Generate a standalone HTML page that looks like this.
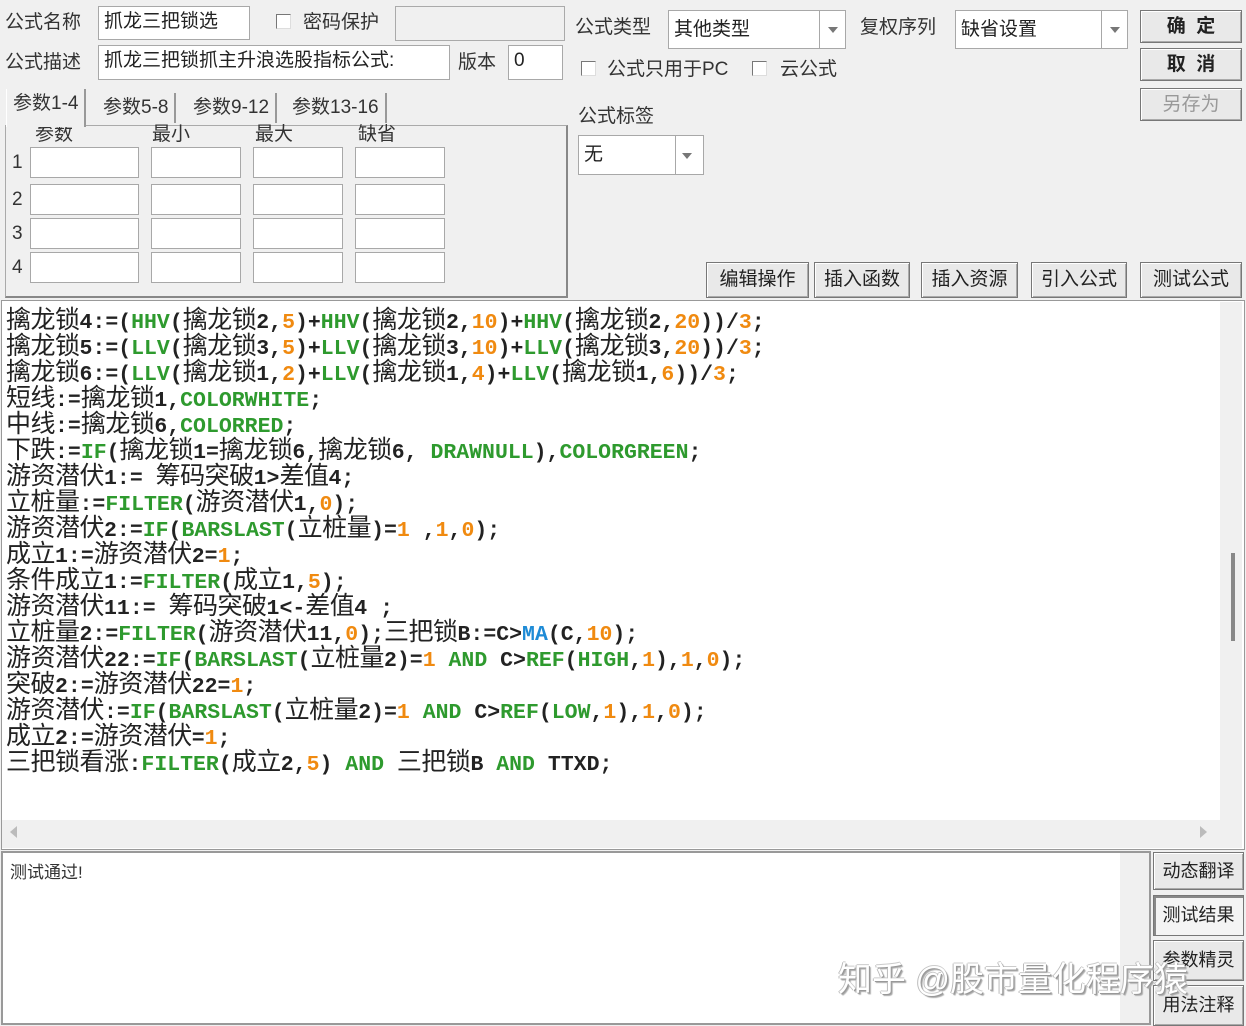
<!DOCTYPE html>
<html><head><meta charset="utf-8"><style>
*{box-sizing:border-box;margin:0;padding:0}
body{width:1246px;height:1026px;background:#f0f0f0;position:relative;overflow:hidden;font-family:"Liberation Sans","Noto Sans CJK SC",sans-serif;color:#222}
.a{position:absolute}
.lbl{position:absolute;font-size:19px;line-height:24px;color:#333;white-space:nowrap}
.inp{position:absolute;background:#fff;border:1px solid #a8a8a8;font-size:19px;line-height:30px;padding-left:5px;color:#222;white-space:nowrap}
.cb{position:absolute;width:15px;height:15px;background:#fff;border:1px solid #777;border-right-color:#ddd;border-bottom-color:#ddd}
.btn{position:absolute;background:#e9e9e9;border:1px solid #777;box-shadow:inset 1px 1px 0 #fff,inset -1px -1px 0 #aaa;font-size:19px;text-align:center;color:#222;white-space:nowrap}
.combo{position:absolute;background:#fff;border:1px solid #a8a8a8;font-size:19px;padding-left:5px;color:#222}
.combo .sep{position:absolute;top:0;bottom:0;border-left:1px solid #a8a8a8}
.combo .arr{position:absolute;width:0;height:0;border-left:5px solid transparent;border-right:5px solid transparent;border-top:6px solid #777}
.tab{position:absolute;font-size:19px;line-height:30px;color:#333;border-right:2px solid #999;padding:0 6px}
#code{position:absolute;left:6px;top:305px;width:1210px;font-family:"Noto Sans CJK SC",sans-serif;font-size:25px;color:#222;letter-spacing:-0.5px}
#code div{height:26px;line-height:26px;white-space:pre}
#code b{font-family:"Liberation Mono",monospace;font-weight:bold;font-size:21.5px;letter-spacing:0;line-height:0}
.g{color:#2e9a2e}.o{color:#f08a10}.bl{color:#1e8bd6}
</style></head><body>
<div class="lbl" style="left:5px;top:11px">公式名称</div>
<div class="inp" style="left:98px;top:6px;width:152px;height:34px">抓龙三把锁选</div>
<div class="cb" style="left:276px;top:14px"></div>
<div class="lbl" style="left:303px;top:11px">密码保护</div>
<div class="a" style="left:395px;top:6px;width:170px;height:35px;background:#f0f0f0;border:1px solid #aaa"></div>
<div class="lbl" style="left:5px;top:51px">公式描述</div>
<div class="inp" style="left:98px;top:45px;width:352px;height:35px">抓龙三把锁抓主升浪选股指标公式:</div>
<div class="lbl" style="left:458px;top:51px">版本</div>
<div class="inp" style="left:508px;top:45px;width:55px;height:35px">0</div>

<div class="a" style="left:5px;top:125px;width:563px;height:173px;border:1px solid #aaa;border-right:2px solid #888;border-bottom:2px solid #888"></div>
<div class="tab" style="left:6px;top:89px;height:38px;background:#f0f0f0;border-left:1px solid #fff;z-index:2">参数1-4</div>
<div class="tab" style="left:97px;top:93px">参数5-8</div>
<div class="tab" style="left:187px;top:93px">参数9-12</div>
<div class="tab" style="left:286px;top:93px">参数13-16</div>
<div class="lbl" style="left:35px;top:123px">参数</div>
<div class="lbl" style="left:152px;top:123px">最小</div>
<div class="lbl" style="left:255px;top:123px">最大</div>
<div class="lbl" style="left:358px;top:123px">缺省</div>
<div class="lbl" style="left:12px;top:151px">1</div>
<div class="lbl" style="left:12px;top:188px">2</div>
<div class="lbl" style="left:12px;top:222px">3</div>
<div class="lbl" style="left:12px;top:256px">4</div>
<div class="inp" style="left:30px;top:147px;width:109px;height:31px"></div><div class="inp" style="left:151px;top:147px;width:90px;height:31px"></div><div class="inp" style="left:253px;top:147px;width:90px;height:31px"></div><div class="inp" style="left:355px;top:147px;width:90px;height:31px"></div>
<div class="inp" style="left:30px;top:184px;width:109px;height:31px"></div><div class="inp" style="left:151px;top:184px;width:90px;height:31px"></div><div class="inp" style="left:253px;top:184px;width:90px;height:31px"></div><div class="inp" style="left:355px;top:184px;width:90px;height:31px"></div>
<div class="inp" style="left:30px;top:218px;width:109px;height:31px"></div><div class="inp" style="left:151px;top:218px;width:90px;height:31px"></div><div class="inp" style="left:253px;top:218px;width:90px;height:31px"></div><div class="inp" style="left:355px;top:218px;width:90px;height:31px"></div>
<div class="inp" style="left:30px;top:252px;width:109px;height:31px"></div><div class="inp" style="left:151px;top:252px;width:90px;height:31px"></div><div class="inp" style="left:253px;top:252px;width:90px;height:31px"></div><div class="inp" style="left:355px;top:252px;width:90px;height:31px"></div>

<div class="lbl" style="left:575px;top:16px">公式类型</div>
<div class="combo" style="left:668px;top:10px;width:178px;height:39px;line-height:37px">其他类型<div class="sep" style="left:150px"></div><div class="arr" style="left:159px;top:16px"></div></div>
<div class="lbl" style="left:860px;top:16px">复权序列</div>
<div class="combo" style="left:955px;top:10px;width:173px;height:39px;line-height:37px">缺省设置<div class="sep" style="left:145px"></div><div class="arr" style="left:154px;top:16px"></div></div>
<div class="cb" style="left:581px;top:61px"></div>
<div class="lbl" style="left:607px;top:58px">公式只用于PC</div>
<div class="cb" style="left:752px;top:61px"></div>
<div class="lbl" style="left:780px;top:58px">云公式</div>
<div class="lbl" style="left:578px;top:105px">公式标签</div>
<div class="combo" style="left:578px;top:135px;width:126px;height:40px;line-height:38px">无<div class="sep" style="left:96px"></div><div class="arr" style="left:103px;top:17px"></div></div>

<div class="btn" style="left:1140px;top:10px;width:102px;height:33px;line-height:31px;font-weight:bold">确&nbsp;&nbsp;定</div>
<div class="btn" style="left:1140px;top:48px;width:102px;height:33px;line-height:31px;font-weight:bold">取&nbsp;&nbsp;消</div>
<div class="btn" style="left:1140px;top:88px;width:102px;height:33px;line-height:31px;color:#999">另存为</div>

<div class="btn" style="left:706px;top:262px;width:103px;height:36px;line-height:34px">编辑操作</div>
<div class="btn" style="left:814px;top:262px;width:96px;height:36px;line-height:34px">插入函数</div>
<div class="btn" style="left:921px;top:262px;width:97px;height:36px;line-height:34px">插入资源</div>
<div class="btn" style="left:1031px;top:262px;width:96px;height:36px;line-height:34px">引入公式</div>
<div class="btn" style="left:1140px;top:262px;width:102px;height:36px;line-height:34px">测试公式</div>

<div class="a" style="left:1px;top:300px;width:1244px;height:550px;border:1px solid #999;background:#fff"></div>
<div id="code"><div>擒龙锁<b>4:=(<span class="g">HHV</span>(</b>擒龙锁<b>2,<span class="o">5</span>)+<span class="g">HHV</span>(</b>擒龙锁<b>2,<span class="o">10</span>)+<span class="g">HHV</span>(</b>擒龙锁<b>2,<span class="o">20</span>))/<span class="o">3</span>;</b></div><div>擒龙锁<b>5:=(<span class="g">LLV</span>(</b>擒龙锁<b>3,<span class="o">5</span>)+<span class="g">LLV</span>(</b>擒龙锁<b>3,<span class="o">10</span>)+<span class="g">LLV</span>(</b>擒龙锁<b>3,<span class="o">20</span>))/<span class="o">3</span>;</b></div><div>擒龙锁<b>6:=(<span class="g">LLV</span>(</b>擒龙锁<b>1,<span class="o">2</span>)+<span class="g">LLV</span>(</b>擒龙锁<b>1,<span class="o">4</span>)+<span class="g">LLV</span>(</b>擒龙锁<b>1,<span class="o">6</span>))/<span class="o">3</span>;</b></div><div>短线<b>:=</b>擒龙锁<b>1,<span class="g">COLORWHITE</span>;</b></div><div>中线<b>:=</b>擒龙锁<b>6,<span class="g">COLORRED</span>;</b></div><div>下跌<b>:=<span class="g">IF</span>(</b>擒龙锁<b>1=</b>擒龙锁<b>6,</b>擒龙锁<b>6, <span class="g">DRAWNULL</span>),<span class="g">COLORGREEN</span>;</b></div><div>游资潜伏<b>1:= </b>筹码突破<b>1&gt;</b>差值<b>4;</b></div><div>立桩量<b>:=<span class="g">FILTER</span>(</b>游资潜伏<b>1,<span class="o">0</span>);</b></div><div>游资潜伏<b>2:=<span class="g">IF</span>(<span class="g">BARSLAST</span>(</b>立桩量<b>)=<span class="o">1</span> ,<span class="o">1</span>,<span class="o">0</span>);</b></div><div>成立<b>1:=</b>游资潜伏<b>2=<span class="o">1</span>;</b></div><div>条件成立<b>1:=<span class="g">FILTER</span>(</b>成立<b>1,<span class="o">5</span>);</b></div><div>游资潜伏<b>11:= </b>筹码突破<b>1&lt;-</b>差值<b>4 ;</b></div><div>立桩量<b>2:=<span class="g">FILTER</span>(</b>游资潜伏<b>11,<span class="o">0</span>);</b>三把锁<b>B:=C&gt;<span class="bl">MA</span>(C,<span class="o">10</span>);</b></div><div>游资潜伏<b>22:=<span class="g">IF</span>(<span class="g">BARSLAST</span>(</b>立桩量<b>2)=<span class="o">1</span> <span class="g">AND</span> C&gt;<span class="g">REF</span>(<span class="g">HIGH</span>,<span class="o">1</span>),<span class="o">1</span>,<span class="o">0</span>);</b></div><div>突破<b>2:=</b>游资潜伏<b>22=<span class="o">1</span>;</b></div><div>游资潜伏<b>:=<span class="g">IF</span>(<span class="g">BARSLAST</span>(</b>立桩量<b>2)=<span class="o">1</span> <span class="g">AND</span> C&gt;<span class="g">REF</span>(<span class="g">LOW</span>,<span class="o">1</span>),<span class="o">1</span>,<span class="o">0</span>);</b></div><div>成立<b>2:=</b>游资潜伏<b>=<span class="o">1</span>;</b></div><div>三把锁看涨<b>:<span class="g">FILTER</span>(</b>成立<b>2,<span class="o">5</span>) <span class="g">AND</span> </b>三把锁<b>B <span class="g">AND</span> TTXD;</b></div></div>
<div class="a" style="left:1220px;top:302px;width:22px;height:518px;background:#f0f0f0"></div>
<div class="a" style="left:1231px;top:553px;width:4px;height:88px;background:#888"></div>
<div class="a" style="left:2px;top:820px;width:1240px;height:28px;background:#f0f0f0"></div>
<div class="a" style="left:10px;top:826px;width:0;height:0;border-top:6px solid transparent;border-bottom:6px solid transparent;border-right:7px solid #bbb"></div>
<div class="a" style="left:1200px;top:826px;width:0;height:0;border-top:6px solid transparent;border-bottom:6px solid transparent;border-left:7px solid #bbb"></div>

<div class="a" style="left:1px;top:851px;width:1150px;height:174px;border:2px solid #999;background:#fff"></div>
<div class="a" style="left:1120px;top:853px;width:29px;height:170px;background:#f0f0f0"></div>
<div class="a" style="left:10px;top:858px;font-size:17px;color:#333">测试通过!</div>
<div class="btn" style="left:1153px;top:852px;width:91px;height:38px;line-height:36px;font-size:18px">动态翻译</div>
<div class="btn" style="left:1153px;top:895px;width:91px;height:41px;line-height:39px;font-size:18px;box-shadow:inset 2px 2px 0 #888;background:#f4f4f4">测试结果</div>
<div class="btn" style="left:1153px;top:940px;width:91px;height:41px;line-height:39px;font-size:18px">参数精灵</div>
<div class="btn" style="left:1153px;top:985px;width:91px;height:41px;line-height:39px;font-size:18px">用法注释</div>
<div class="a" style="left:838px;top:952px;font-size:34px;color:#fff;white-space:nowrap;text-shadow:1px 1px 0 #999,-1px 0 0 #bbb,0 -1px 0 #ccc,2px 2px 1px #aaa">知乎 @股市量化程序猿</div>
</body></html>
